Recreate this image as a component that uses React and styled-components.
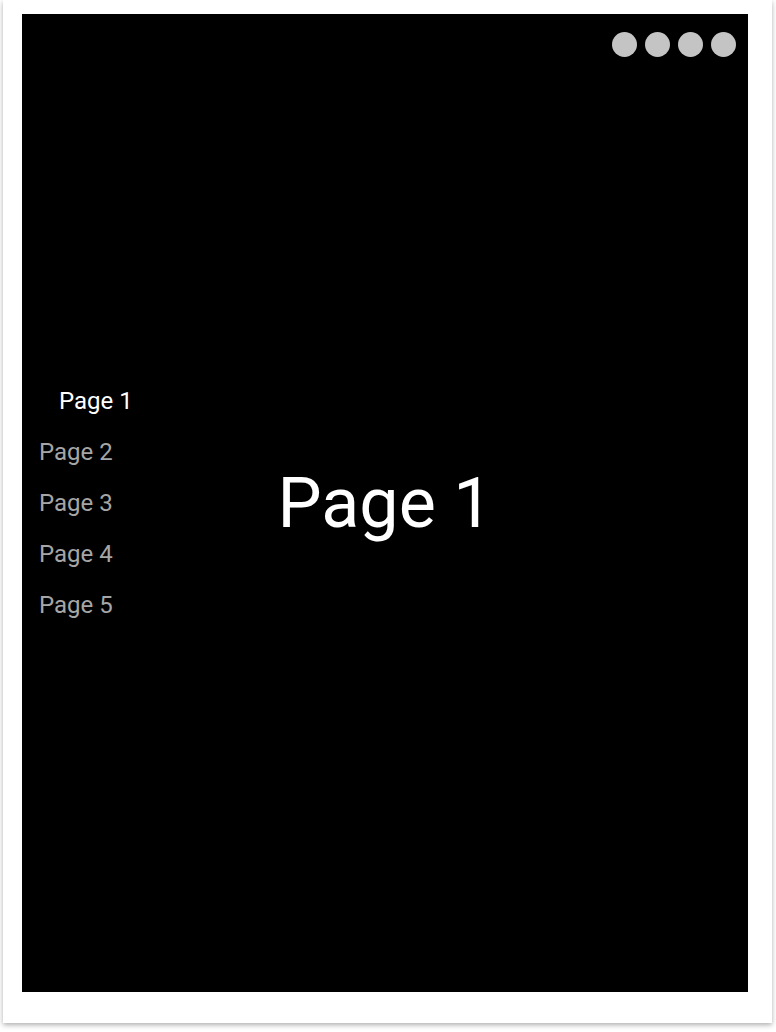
import React, { useState } from "react";
import styled, { createGlobalStyle } from "styled-components";

const Global = createGlobalStyle`
  html, body { margin: 0; padding: 0; background: #ffffff; }
  body { font-family: Roboto, "Liberation Sans", sans-serif; }
  * { box-sizing: border-box; }
`;

const Page = styled.div`
  width: 776px;
  height: 1032px;
  padding-left: 3px;
  overflow: hidden;
`;

const Card = styled.div`
  width: 769px;
  height: 1023px;
  background: #ffffff;
  box-shadow: 0 2px 5px rgba(0, 0, 0, 0.32);
  padding: 14px 24px 31px 19px;
`;

const Screen = styled.div`
  position: relative;
  width: 726px;
  height: 978px;
  background: #000000;
  display: grid;
  grid-template-columns: 1fr auto 1fr;
  align-items: center;
`;

const Dots = styled.div`
  position: absolute;
  top: 18px;
  right: 12px;
  display: flex;
  gap: 8px;
`;

const Dot = styled.span`
  width: 25px;
  height: 25px;
  border-radius: 50%;
  background: #c4c4c4;
`;

const Nav = styled.nav`
  justify-self: start;
  display: flex;
  flex-direction: column;
  gap: 15px;
  padding-left: 17px;
`;

const NavItem = styled.div`
  font-size: 24px;
  line-height: 36px;
  color: ${(p) => (p.$active ? "#ffffff" : "#a6a6a6")};
  padding-left: ${(p) => (p.$active ? "20px" : "0")};
  cursor: pointer;
  white-space: nowrap;
`;

const Title = styled.h1`
  margin: 0;
  font-weight: 400;
  font-size: 70px;
  line-height: 70px;
  color: #ffffff;
  white-space: nowrap;
`;

export default function App() {
  const [active, setActive] = useState(0);
  const pages = ["Page 1", "Page 2", "Page 3", "Page 4", "Page 5"];
  return (
    <>
      <Global />
      <Page>
        <Card>
          <Screen>
            <Dots>
              <Dot />
              <Dot />
              <Dot />
              <Dot />
            </Dots>
            <Nav>
              {pages.map((p, i) => (
                <NavItem key={p} $active={i === active} onClick={() => setActive(i)}>
                  {p}
                </NavItem>
              ))}
            </Nav>
            <Title>{pages[active]}</Title>
            <div />
          </Screen>
        </Card>
      </Page>
    </>
  );
}
